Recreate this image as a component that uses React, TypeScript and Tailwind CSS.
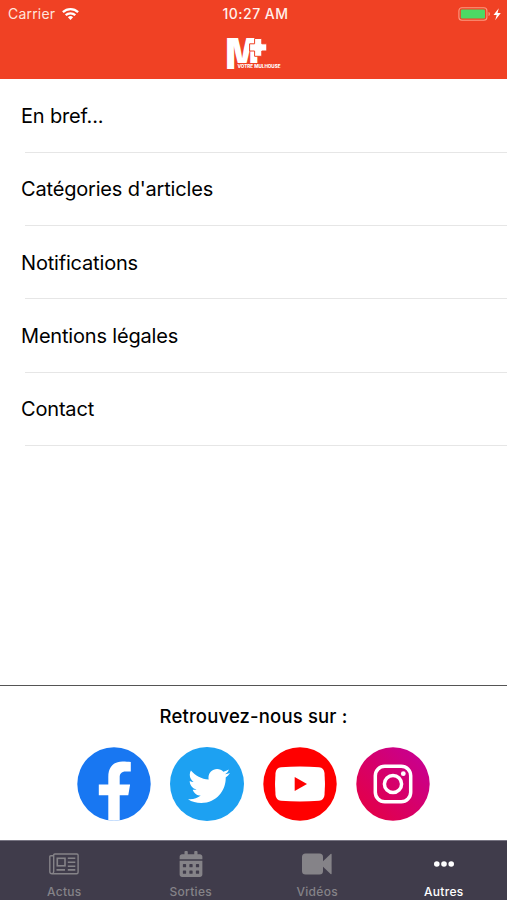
import React from "react";
import { FaCalendarAlt, FaTwitter } from "react-icons/fa";

const menuItems = [
  "En bref...",
  "Catégories d'articles",
  "Notifications",
  "Mentions légales",
  "Contact",
];

const StatusBar: React.FC = () => (
  <div className="grid h-[27px] grid-cols-3 items-center pl-2 pr-[5px] text-sm leading-none text-white">
    <div className="flex items-center gap-[7px]">
      <span className="tracking-[0.2px] text-[#ffe4dd]">Carrier</span>
      <svg viewBox="0 0 17 12" className="h-3 w-[17px]" fill="none" stroke="#fff" strokeWidth="2.3">
        <path d="M.9 4.2a11 11 0 0 1 15.2 0" />
        <path d="M3.7 7.2a7 7 0 0 1 9.6 0" />
        <path d="M8.5 12 5.9 9.3a3.8 3.8 0 0 1 5.2 0z" fill="#fff" stroke="none" />
      </svg>
    </div>
    <span className="pl-px text-center font-medium tracking-[0.5px] text-[#fff0ec]">10:27 AM</span>
    <svg viewBox="0 0 44 14" className="h-[14px] w-11 justify-self-end">
      <rect x=".9" y=".7" width="28" height="12.6" rx="3" fill="none" stroke="#fb9a80" strokeWidth="1.1" />
      <rect x="2.8" y="2.5" width="24.2" height="9" rx="1.3" fill="#4cd964" />
      <path d="M30.5 5v4c1.9-.5 1.9-3.5 0-4z" fill="#fb9a80" />
      <path d="M40.8 1.2 35.5 8h3.2l-1.5 5.2L42.8 6h-3.3z" fill="#fff" />
    </svg>
  </div>
);

const Logo: React.FC = () => (
  <svg viewBox="0 0 56 34" className="mx-auto mt-[9px] h-[34px] w-14 overflow-visible">
    <text
      x="-.5"
      y="32.5"
      fontSize="42.5"
      fontWeight="900"
      textLength="33.5"
      lengthAdjust="spacingAndGlyphs"
      fill="#fff"
      className="font-['Inter',sans-serif]"
    >
      M
    </text>
    <path d="M10.5 27h24v7h-24z" fill="#f04124" />
    <path
      d="M28.6 2.5h7.2v5.3h5V15h-5v5.3h-7.2V15h-5V7.8h5z"
      fill="#fff"
      stroke="#f04124"
      strokeWidth="1"
    />
    <text
      x="11.5"
      y="31.8"
      fontSize="4.4"
      fontWeight="800"
      textLength="43"
      lengthAdjust="spacingAndGlyphs"
      fill="#fff"
      className="font-['Inter',sans-serif]"
    >
      VOTRE MULHOUSE
    </text>
  </svg>
);

const FacebookIcon: React.FC = () => (
  <svg viewBox="0 0 74 74" className="size-[74px]">
    <clipPath id="round">
      <circle cx="37" cy="37" r="36.7" />
    </clipPath>
    <g clipPath="url(#round)">
      <path d="M0 0h74v74H0z" fill="#1877f2" />
      <path
        d="M31.3 74V48.3h-9.5V37.4h9.5v-7.6c0-9.9 5.4-15.3 14.2-15.3 3.2 0 6 .2 8.3.6v9.3h-5c-4.5 0-6.1 2.4-6.1 6v7h10.4l-1.8 10.9h-8.6V74z"
        fill="#fff"
      />
    </g>
  </svg>
);

const TwitterIcon: React.FC = () => (
  <div className="flex size-[74px] items-center justify-center rounded-full bg-[#1da1f2]">
    <FaTwitter size={42} color="#fff" className="mt-[3px] ml-[3px]" />
  </div>
);

const YoutubeIcon: React.FC = () => (
  <svg viewBox="0 0 74 74" className="size-[74px]">
    <circle cx="37" cy="37" r="36.7" fill="#f00" />
    <path
      d="M18 20.3q19-1.6 38 0 5 .6 5.5 5.7 1 11 0 22-.5 5.2-5.5 5.7-19 1.6-38 0-5-.5-5.5-5.7-1-11 0-22 .5-5.1 5.5-5.7z"
      fill="#fff"
    />
    <path d="M31.7 30v14L44 37z" fill="#f00" />
  </svg>
);

const InstagramIcon: React.FC = () => (
  <svg viewBox="0 0 74 74" className="size-[74px]" fill="none" stroke="#fff" strokeWidth="3.5">
    <defs>
      <linearGradient id="insta" x1="0" y1="1" x2="1" y2="0">
        <stop offset="0" stopColor="#e7003f" />
        <stop offset=".5" stopColor="#d6006a" />
        <stop offset="1" stopColor="#c4009b" />
      </linearGradient>
    </defs>
    <circle cx="37" cy="37" r="36.7" fill="url(#insta)" stroke="none" />
    <rect x="19.3" y="19.3" width="35.4" height="35.4" rx="9.5" />
    <circle cx="37" cy="37" r="8.6" />
    <circle cx="47.3" cy="26.7" r="2.4" fill="#fff" stroke="none" />
  </svg>
);

const NewsIcon: React.FC = () => (
  <svg viewBox="0 0 30 22" className="h-[22px] w-[30px]" fill="none" stroke="currentColor" strokeWidth="1.4">
    <path d="M4.7 18.5V2.2Q4.7 1 5.9 1h22q1.2 0 1.2 1.2v17.1q0 1.5-1.5 1.500H3q-2.2 0-2.2-2.2V3.8q0-1.1 1.1-1.1h2.8M4.7 18.5q0 2.1-1.7 2.3" />
    <rect x="8.3" y="5.3" width="7.7" height="7.5" strokeWidth="1.6" />
    <path d="M18.8 5.3h7.5M18.8 9.3h7.5M18.8 13.2h7.5M7.5 16.9H16M18.8 16.9h7.5" strokeWidth="1.6" />
  </svg>
);

const VideoIcon: React.FC = () => (
  <svg viewBox="0 0 30 22" className="h-[22px] w-[30px]" fill="currentColor">
    <rect y=".5" width="21" height="21" rx="3.5" />
    <path d="M20.5 8.8 28.6 1q1-.8 1 .5v19q0 1.300-1 .5l-8.100-7.800z" />
  </svg>
);

const tabs = [
  { label: "Actus", icon: <NewsIcon /> },
  { label: "Sorties", icon: <FaCalendarAlt size={26} /> },
  { label: "Vidéos", icon: <VideoIcon /> },
  {
    label: "Autres",
    icon: (
      <svg viewBox="0 0 20 6" className="h-1.5 w-5" fill="currentColor">
        <circle cx="2.8" cy="3" r="2.8" />
        <circle cx="10" cy="3" r="2.8" />
        <circle cx="17.2" cy="3" r="2.8" />
      </svg>
    ),
    active: true,
  },
];

const App: React.FC = () => {
  return (
    <div className="flex h-[900px] w-full flex-col overflow-hidden bg-white font-['Inter',sans-serif] text-black">
      {/* ---------- HEADER ---------- */}
      <header className="h-[79px] shrink-0 bg-[#f04124]">
        <StatusBar />
        <Logo />
      </header>

      {/* ---------- MENU ---------- */}
      <ul className="flex-1 pt-[0.6px]">
        {menuItems.map((item) => (
          <li key={item} className="flex h-[73.25px] flex-col">
            <span className="flex flex-1 items-center pt-px pl-[21px] text-xl tracking-[-0.18px]">{item}</span>
            <span className="ml-[25px] h-px bg-[#e6e6e6]" />
          </li>
        ))}
      </ul>

      {/* ---------- RESEAUX SOCIAUX ---------- */}
      <section className="h-[155px] shrink-0 border-t border-[#555]">
        <h2 className="pt-4 text-center text-[18.5px] leading-7 font-medium tracking-[0.15px]">
          Retrouvez-nous sur :
        </h2>
        <div className="mt-[17px] flex justify-center gap-[19px]">
          <FacebookIcon />
          <TwitterIcon />
          <YoutubeIcon />
          <InstagramIcon />
        </div>
      </section>

      {/* ---------- TABS ---------- */}
      <nav className="grid h-[60px] shrink-0 grid-cols-4 border-t border-[#777482] bg-[#403c4b] pl-px">
        {tabs.map((tab) => (
          <div key={tab.label} className={`flex flex-col items-center ${tab.active ? "text-white" : "text-[#858388]"}`}>
            <div className="mt-[10px] flex h-[26px] items-center">{tab.icon}</div>
            <span className="mt-[7px] text-xs font-medium tracking-[0.3px]">{tab.label}</span>
          </div>
        ))}
      </nav>
    </div>
  );
};

export default App;
